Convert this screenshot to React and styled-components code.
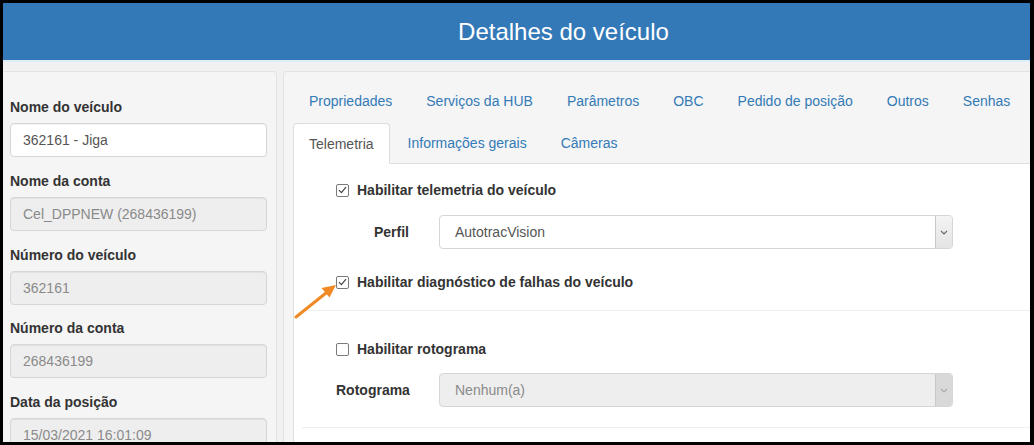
import React from "react";
import styled, { createGlobalStyle } from "styled-components";

const Global = createGlobalStyle`
  html, body { margin: 0; padding: 0; background: #000; }
  body { font-family: "Liberation Sans", Arial, Helvetica, sans-serif; font-size: 14px; color: #333; }
  * { box-sizing: border-box; }
`;

const Frame = styled.div`
  position: relative;
  margin: 3px 4px 0 3px;
  height: 439px;
  overflow: hidden;
  background: #f1f1f1;
  display: flex;
  flex-direction: column;
`;

const Header = styled.header`
  height: 59px;
  flex: none;
  background: #3479b7;
  border-bottom: 2px solid #dfeef6;
  display: flex;
  align-items: center;
  justify-content: center;
  padding-left: 94px;
  color: #fff;
  font-size: 24px;
`;

const Main = styled.main`
  flex: 1;
  display: flex;
  gap: 6px;
  padding-top: 9px;
  min-height: 0;
`;

const SidePanel = styled.aside`
  width: 274px;
  flex: none;
  background: #f5f5f5;
  border: 1px solid #e3e3e3;
  border-left: none;
  border-bottom: none;
  border-radius: 0 4px 0 0;
  padding: 25px 9px 0 7px;
`;

const Field = styled.div`
  margin-bottom: 13.75px;
`;

const FieldLabel = styled.div`
  font-weight: bold;
  line-height: 20px;
  margin-bottom: 6px;
  color: #333;
`;

const TextBox = styled.div`
  height: 34px;
  border: 1px solid #d6d6d6;
  border-radius: 4px;
  background: ${(p) => (p.$disabled ? "#eeeeee" : "#fff")};
  color: ${(p) => (p.$disabled ? "#8a8a8a" : "#555")};
  padding: 0 12px;
  display: flex;
  align-items: center;
  box-shadow: inset 0 1px 1px rgba(0, 0, 0, 0.05);
`;

const ContentPanel = styled.section`
  flex: 1;
  background: #f5f5f5;
  border: 1px solid #e3e3e3;
  border-right: none;
  border-bottom: none;
  border-radius: 4px 0 0 0;
  padding: 9px 0 0 9px;
  display: flex;
  flex-direction: column;
  min-width: 0;
`;

const TabRow = styled.ul`
  list-style: none;
  margin: 0;
  padding: 0;
  display: flex;
  height: ${(p) => (p.$bordered ? "41px" : "40px")};
  margin-top: ${(p) => (p.$bordered ? "2px" : "0")};
  border-bottom: ${(p) => (p.$bordered ? "1px solid #dddddd" : "none")};
`;

const Tab = styled.li`
  padding: 10px 15px;
  margin-right: 2px;
  line-height: 20px;
  height: ${(p) => (p.$active ? "41px" : "40px")};
  color: ${(p) => (p.$active ? "#555" : "#337ab7")};
  background: ${(p) => (p.$active ? "#fff" : "transparent")};
  border: 1px solid ${(p) => (p.$active ? "#dddddd" : "transparent")};
  border-bottom-color: transparent;
  border-radius: 4px 4px 0 0;
  white-space: nowrap;
  display: flex;
  align-items: center;
`;

const TabContent = styled.div`
  flex: 1;
  background: #fff;
  border-left: 1px solid #dddddd;
`;

const Section = styled.div`
  margin-left: 8px;
  border-bottom: 1px solid #eeeeee;
  padding: ${(p) => p.$pad};
  padding-left: 34px;
`;

const CheckRow = styled.label`
  display: flex;
  align-items: center;
  height: 20px;
  gap: 8px;
  font-weight: bold;
  color: #333;
  margin-top: ${(p) => p.$mt || "0px"};
`;

const CheckBox = styled.span`
  width: 13px;
  height: 13px;
  border: 1px solid #7a7a7a;
  border-radius: 2px;
  background: #fff;
  display: inline-flex;
  align-items: center;
  justify-content: center;
  flex: none;
`;

const FormRow = styled.div`
  display: flex;
  align-items: center;
  margin-top: ${(p) => p.$mt};
`;

const FormLabel = styled.div`
  width: 73px;
  text-align: right;
  font-weight: bold;
  color: #333;
  white-space: nowrap;
  margin-right: 30px;
`;

const Select = styled.div`
  width: 514px;
  height: 34px;
  border: 1px solid #d6d6d6;
  border-radius: 4px;
  background: ${(p) => (p.$disabled ? "#eeeeee" : "#fff")};
  color: ${(p) => (p.$disabled ? "#8a8a8a" : "#555")};
  display: flex;
  align-items: stretch;
  overflow: hidden;
`;

const SelectText = styled.div`
  flex: 1;
  padding-left: 15px;
  display: flex;
  align-items: center;
`;

const SelectButton = styled.div`
  width: 17px;
  flex: none;
  border-left: 1px solid #c8c8c8;
  background: ${(p) => (p.$disabled ? "#d9d9d9" : "linear-gradient(#f4f4f4, #e4e4e4)")};
  display: flex;
  align-items: center;
  justify-content: center;
`;

const Arrow = styled.svg`
  position: absolute;
  left: 287px;
  top: 277px;
  width: 52px;
  height: 44px;
  pointer-events: none;
`;

const Check = () => (
  <svg width="9" height="8" viewBox="0 0 9 8">
    <path d="M1 4.2 L3.4 6.6 L8 1.2" fill="none" stroke="#444" strokeWidth="1.2" />
  </svg>
);

const Chevron = ({ color }) => (
  <svg width="8" height="5" viewBox="0 0 8 5">
    <path d="M1 1 L4 4 L7 1" fill="none" stroke={color} strokeWidth="1.1" />
  </svg>
);

const fields = [
  { label: "Nome do veículo", value: "362161 - Jiga", disabled: false },
  { label: "Nome da conta", value: "Cel_DPPNEW (268436199)", disabled: true },
  { label: "Número do veículo", value: "362161", disabled: true },
  { label: "Número da conta", value: "268436199", disabled: true },
  { label: "Data da posição", value: "15/03/2021 16:01:09", disabled: true },
];

const row1 = ["Propriedades", "Serviços da HUB", "Parâmetros", "OBC", "Pedido de posição", "Outros", "Senhas"];
const row2 = ["Telemetria", "Informações gerais", "Câmeras"];

export default function App() {
  return (
    <>
      <Global />
      <Frame>
        <Header>Detalhes do veículo</Header>
        <Main>
          <SidePanel>
            {fields.map((f) => (
              <Field key={f.label}>
                <FieldLabel>{f.label}</FieldLabel>
                <TextBox $disabled={f.disabled}>{f.value}</TextBox>
              </Field>
            ))}
          </SidePanel>
          <ContentPanel>
            <TabRow>
              {row1.map((t) => (
                <Tab key={t}>{t}</Tab>
              ))}
            </TabRow>
            <TabRow $bordered>
              {row2.map((t, i) => (
                <Tab key={t} $active={i === 0}>
                  {t}
                </Tab>
              ))}
            </TabRow>
            <TabContent>
              <Section $pad="16px 0 18px">
                <CheckRow>
                  <CheckBox>
                    <Check />
                  </CheckBox>
                  Habilitar telemetria do veículo
                </CheckRow>
                <FormRow $mt="15px">
                  <FormLabel>Perfil</FormLabel>
                  <Select>
                    <SelectText>AutotracVision</SelectText>
                    <SelectButton>
                      <Chevron color="#666" />
                    </SelectButton>
                  </Select>
                </FormRow>
                <CheckRow $mt="23px">
                  <CheckBox>
                    <Check />
                  </CheckBox>
                  Habilitar diagnóstico de falhas do veículo
                </CheckRow>
              </Section>
              <Section $pad="28px 0 20px">
                <CheckRow>
                  <CheckBox />
                  Habilitar rotograma
                </CheckRow>
                <FormRow $mt="14px">
                  <FormLabel>Rotograma</FormLabel>
                  <Select $disabled>
                    <SelectText>Nenhum(a)</SelectText>
                    <SelectButton $disabled>
                      <Chevron color="#aaa" />
                    </SelectButton>
                  </Select>
                </FormRow>
              </Section>
            </TabContent>
          </ContentPanel>
        </Main>
        <Arrow viewBox="0 0 52 44">
          <line x1="6" y1="37" x2="36" y2="13" stroke="#f08a26" strokeWidth="3" strokeLinecap="round" />
          <polygon points="46,5 39.5,17.5 31.5,8" fill="#f08a26" />
        </Arrow>
      </Frame>
    </>
  );
}
